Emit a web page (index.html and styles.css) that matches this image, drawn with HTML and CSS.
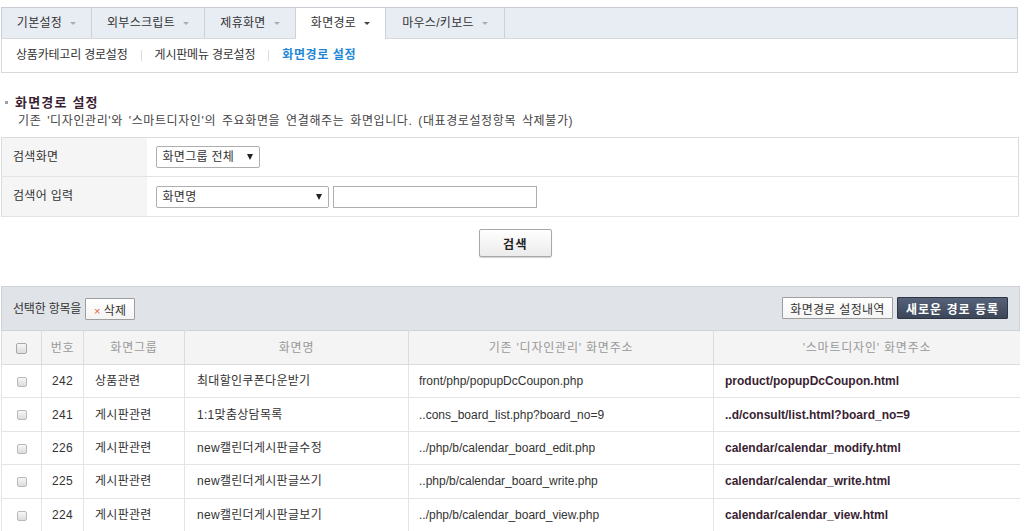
FILE: index.html
```html
<!DOCTYPE html>
<html lang="ko">
<head>
<meta charset="utf-8">
<title>화면경로 설정</title>
<link rel="stylesheet" href="styles.css">
</head>
<body>
<div class="page">
  <div class="nav">
    <ul class="tabs">
      <li class="tab w90">기본설정<span class="caret"></span></li>
      <li class="tab w113">외부스크립트<span class="caret"></span></li>
      <li class="tab w91">제휴화면<span class="caret"></span></li>
      <li class="tab w90 active">화면경로<span class="caret"></span></li>
      <li class="tab w119">마우스/키보드<span class="caret"></span></li>
    </ul>
    <div class="subnav">
      <a class="sub">상품카테고리 경로설정</a>
      <span class="sep"></span>
      <a class="sub">게시판메뉴 경로설정</a>
      <span class="sep"></span>
      <a class="sub current">화면경로 설정</a>
    </div>
  </div>

  <div class="section">
    <h2 class="title"><span class="bullet"></span>화면경로 설정</h2>
    <p class="desc">기존 '디자인관리'와 '스마트디자인'의 주요화면을 연결해주는 화면입니다. (대표경로설정항목 삭제불가)</p>
  </div>

  <table class="search">
    <tr class="r1">
      <th>검색화면</th>
      <td><div class="select s1"><span>화면그룹 전체</span><span class="arrow"></span></div></td>
    </tr>
    <tr class="r2">
      <th>검색어 입력</th>
      <td>
        <div class="fields">
          <div class="select s2"><span>화면명</span><span class="arrow"></span></div>
          <div class="input"></div>
        </div>
      </td>
    </tr>
  </table>

  <div class="btn-row"><button class="btn-search">검색</button></div>

  <div class="list">
    <div class="toolbar">
      <div class="tl">
        <span class="tl-label">선택한 항목을</span>
        <button class="btn-del"><span class="x">×</span>삭제</button>
      </div>
      <div class="tr">
        <button class="btn-white">화면경로 설정내역</button>
        <button class="btn-dark">새로운 경로 등록</button>
      </div>
    </div>
    <table class="grid">
      <colgroup>
        <col class="c1"><col class="c2"><col class="c3"><col class="c4"><col class="c5"><col class="c6">
      </colgroup>
      <thead>
        <tr>
          <th><span class="chk hd"></span></th>
          <th>번호</th>
          <th>화면그룹</th>
          <th>화면명</th>
          <th>기존 '디자인관리' 화면주소</th>
          <th>'스마트디자인' 화면주소</th>
        </tr>
      </thead>
      <tbody>
        <tr>
          <td class="ck"><span class="chk"></span></td>
          <td class="num">242</td>
          <td class="grp">상품관련</td>
          <td class="name">최대할인쿠폰다운받기</td>
          <td class="old">front/php/popupDcCoupon.php</td>
          <td class="smart">product/popupDcCoupon.html</td>
        </tr>
        <tr>
          <td class="ck"><span class="chk"></span></td>
          <td class="num">241</td>
          <td class="grp">게시판관련</td>
          <td class="name">1:1맞춤상담목록</td>
          <td class="old">..cons_board_list.php?board_no=9</td>
          <td class="smart">..d/consult/list.html?board_no=9</td>
        </tr>
        <tr>
          <td class="ck"><span class="chk"></span></td>
          <td class="num">226</td>
          <td class="grp">게시판관련</td>
          <td class="name">new캘린더게시판글수정</td>
          <td class="old">../php/b/calendar_board_edit.php</td>
          <td class="smart">calendar/calendar_modify.html</td>
        </tr>
        <tr>
          <td class="ck"><span class="chk"></span></td>
          <td class="num">225</td>
          <td class="grp">게시판관련</td>
          <td class="name">new캘린더게시판글쓰기</td>
          <td class="old">..php/b/calendar_board_write.php</td>
          <td class="smart">calendar/calendar_write.html</td>
        </tr>
        <tr>
          <td class="ck"><span class="chk"></span></td>
          <td class="num">224</td>
          <td class="grp">게시판관련</td>
          <td class="name">new캘린더게시판글보기</td>
          <td class="old">../php/b/calendar_board_view.php</td>
          <td class="smart">calendar/calendar_view.html</td>
        </tr>
      </tbody>
    </table>
  </div>
</div>
</body>
</html>
```

FILE: styles.css
```css
* { box-sizing: border-box; }

body {
  margin: 0;
  background: #fff;
  font-family: "Liberation Sans", "Noto Sans CJK KR", sans-serif;
  font-size: 12px;
  line-height: 14px;
  color: #333;
  letter-spacing: 0.3px;
}

.page {
  width: 1020px;
  padding-left: 1px;
  overflow: hidden;
}

/* ---------- tabs ---------- */
.nav { width: 1017px; margin-top: 7px; }

.tabs {
  display: flex;
  margin: 0;
  padding: 0;
  list-style: none;
  height: 31px;
  background: #e8edf4;
  border: 1px solid #c9cdd3;
  border-bottom: none;
}

.tab {
  display: flex;
  align-items: center;
  justify-content: center;
  height: 30px;
  border-right: 1px solid #cdd1d7;
  color: #333;
  font-size: 12px;
}
.w90 { width: 90px; }
.w91 { width: 91px; }
.w113 { width: 113px; }
.w119 { width: 119px; }

.tab.active {
  position: relative;
  z-index: 1;
  height: 31px;
  margin-bottom: -1px;
  background: #fff;
  padding-bottom: 1px;
}

.caret {
  display: inline-block;
  margin-left: 8px;
  width: 0;
  height: 0;
  border-left: 3px solid transparent;
  border-right: 3px solid transparent;
  border-top: 3px solid #a9adb3;
}
.tab.active .caret { border-top-color: #444; }

.subnav {
  display: flex;
  align-items: center;
  height: 35px;
  border: 1px solid #d5d8dc;
  padding-left: 14px;
  padding-bottom: 1px;
  background: #fff;
}
.sub { color: #333; font-size: 12px; letter-spacing: -0.2px; }
.sub.current { color: #1f87d6; font-weight: bold; letter-spacing: 0.6px; }
.sep {
  display: inline-block;
  width: 1px;
  height: 11px;
  background: #dcdcdc;
  margin: 0 13px;
}

/* ---------- section ---------- */
.section { padding: 22px 0 0 4px; }

.title {
  display: flex;
  align-items: center;
  margin: 0;
  font-size: 13px;
  line-height: 15px;
  font-weight: bold;
  color: #3a1f34;
  letter-spacing: 1.2px;
}
.bullet {
  display: inline-block;
  width: 3px;
  height: 3px;
  background: #a0a0a0;
  margin-right: 7px;
}
.desc {
  margin: 4px 0 0 13px;
  color: #444;
  line-height: 14px;
  letter-spacing: 0.6px;
  word-spacing: 2px;
}

/* ---------- search ---------- */
.search {
  width: 1018px;
  margin-top: 9px;
  border-collapse: collapse;
  border: 1px solid #dcdcdc;
}
.search th {
  width: 145px;
  background: #f5f5f5;
  text-align: left;
  font-weight: normal;
  padding: 0 0 0 11px;
  border-bottom: 1px solid #e3e3e3;
  color: #333;
}
.search td {
  padding: 0 0 0 9px;
  border-bottom: 1px solid #e3e3e3;
}
.search .r1 th, .search .r1 td { height: 39px; }
.search .r2 th, .search .r2 td { height: 40px; }
.search .r1 th { padding-bottom: 0; }
.search .r2 th { padding-bottom: 2px; }

.fields { display: flex; gap: 4px; }

.select {
  display: flex;
  align-items: center;
  justify-content: space-between;
  height: 22px;
  padding: 0 6px 0 6px;
  border: 1px solid #aeaeae;
  border-radius: 2px;
  background: #fff;
  color: #333;
}
.select.s1 { width: 104px; }
.select.s2 { width: 173px; }
.arrow {
  width: 0;
  height: 0;
  border-left: 3.5px solid transparent;
  border-right: 3.5px solid transparent;
  border-top: 6px solid #222;
}
.input {
  width: 204px;
  height: 22px;
  border: 1px solid #aeaeae;
  background: #fff;
}

/* ---------- search button ---------- */
.btn-row {
  display: flex;
  padding-left: 478px;
  margin-top: 12px;
}
.btn-search {
  width: 73px;
  height: 28px;
  border: 1px solid #a8a8a8;
  border-radius: 2px;
  background: linear-gradient(#ffffff, #ebebeb);
  box-shadow: 0 1px 1px rgba(0,0,0,0.18);
  font-family: inherit;
  font-size: 12px;
  font-weight: bold;
  color: #222;
  letter-spacing: 1.5px;
  padding: 0;
}

/* ---------- list ---------- */
.list { margin-top: 29px; width: 1019px; }

.toolbar {
  display: flex;
  align-items: center;
  justify-content: space-between;
  height: 44px;
  background: #e0e4e8;
  border: 1px solid #cfd3d7;
  border-bottom: none;
  padding: 0 11px 0 11px;
}
.tl { display: flex; align-items: center; gap: 4px; padding-top: 1px; }
.tl-label { letter-spacing: -0.2px; }
.tr { display: flex; align-items: center; gap: 4px; padding-bottom: 1px; }

.btn-del, .btn-white, .btn-dark {
  font-family: inherit;
  font-size: 12px;
  letter-spacing: 0.3px;
  height: 22px;
  padding: 0;
  border-radius: 1px;
}
.btn-del {
  width: 50px;
  border: 1px solid #9e9e9e;
  background: linear-gradient(#ffffff, #f4f4f4);
  color: #333;
}
.btn-del .x {
  color: #e0603a;
  font-size: 11px;
  margin-right: 3px;
}
.btn-white {
  width: 111px;
  border: 1px solid #9e9e9e;
  background: linear-gradient(#ffffff, #f5f5f5);
  color: #333;
}
.btn-dark {
  width: 111px;
  border: 1px solid #2e3644;
  background: linear-gradient(#56627a, #3c4658);
  color: #fff;
  font-weight: bold;
  letter-spacing: 1px;
}

.grid {
  width: 1019px;
  table-layout: fixed;
  border-collapse: collapse;
  border: 1px solid #d9d9d9;
}
.c1 { width: 40px; }
.c2 { width: 42px; }
.c3 { width: 101px; }
.c4 { width: 224px; }
.c5 { width: 305px; }
.c6 { width: 307px; }

.grid th {
  height: 34px;
  background: #f4f4f4;
  border: 1px solid #dcdcdc;
  border-top: 1px solid #cfd3d7;
  font-weight: normal;
  color: #999;
  text-align: center;
  padding: 0;
  letter-spacing: 0.8px;
}
.grid td {
  height: 33.4px;
  border: 1px solid #e4e4e4;
  padding: 0;
  white-space: nowrap;
  overflow: hidden;
  color: #333;
}
.grid td.ck { text-align: center; }
.grid td.num { text-align: center; letter-spacing: 0.3px; }
.grid td.grp { padding-left: 11px; }
.grid td.name { padding-left: 12px; }
.grid td.old { padding-left: 10px; letter-spacing: 0; }
.grid td.smart { padding-left: 11px; font-weight: bold; color: #3a1f34; letter-spacing: 0; }

.chk {
  display: inline-block;
  vertical-align: middle;
  width: 10px;
  height: 10px;
  border: 1px solid #b9b9b9;
  border-radius: 2px;
  background: linear-gradient(#f7f7f7, #dcdcdc);
}
.chk.hd { width: 11px; height: 11px; border-color: #a8a8a8; }
```
